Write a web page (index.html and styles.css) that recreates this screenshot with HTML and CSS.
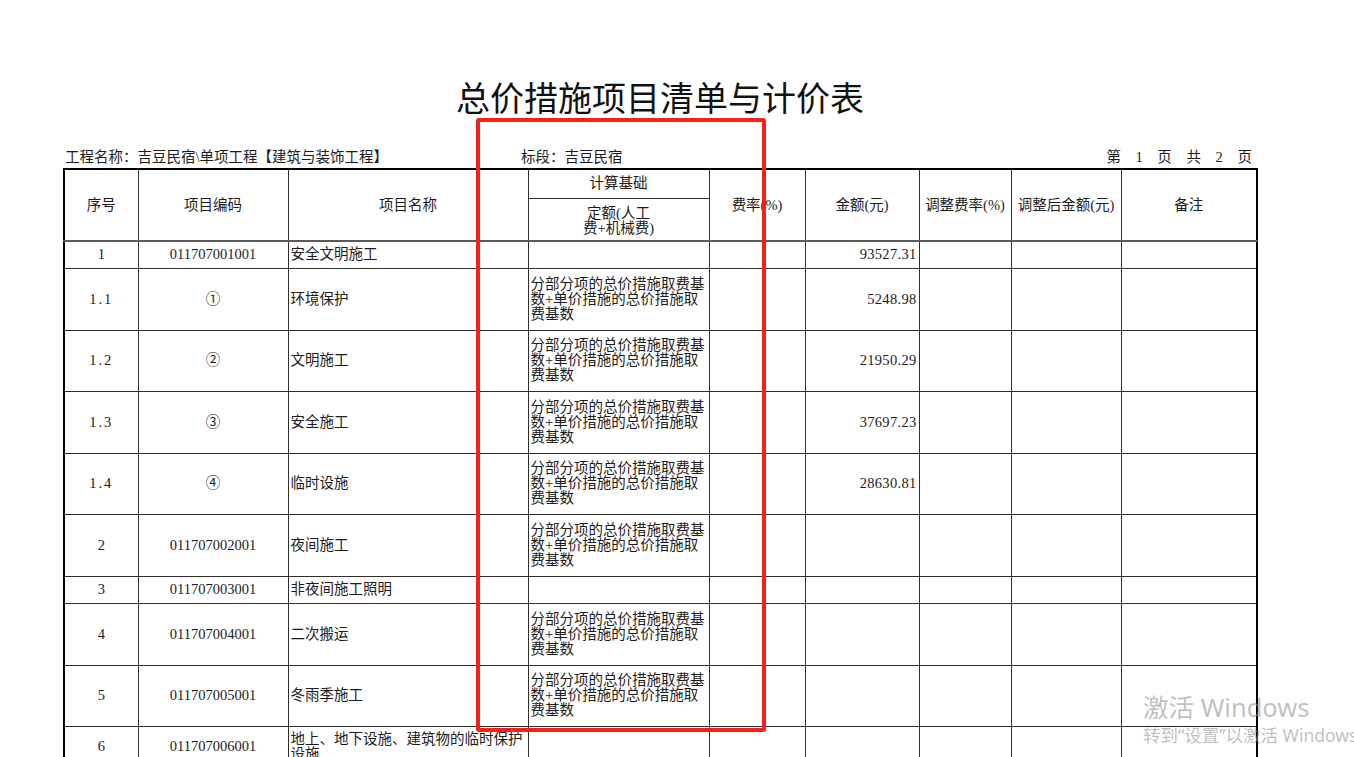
FILE: index.html
```html
<!DOCTYPE html>
<html lang="zh-CN">
<head>
    <meta charset="UTF-8">
    <title>总价措施项目清单与计价表</title>
    <link rel="stylesheet" href="styles.css">
</head>
<body>

    <div class="sheet">
        <h1 class="title">总价措施项目清单与计价表</h1>

        <div class="meta">
            <span>工程名称：吉豆民宿\单项工程【建筑与装饰工程】</span>
            <span>标段：吉豆民宿</span>
            <span class="pager">第 1 页 共 2 页</span>
        </div>

        <table class="bill">
            <colgroup>
                <col class="c-no">
                <col class="c-code">
                <col class="c-name">
                <col class="c-base">
                <col class="c-rate">
                <col class="c-amount">
                <col class="c-adjrate">
                <col class="c-adjamount">
                <col class="c-note">
            </colgroup>
            <thead>
                <tr class="head-top">
                    <th rowspan="2">序号</th>
                    <th rowspan="2">项目编码</th>
                    <th rowspan="2">项目名称</th>
                    <th>计算基础</th>
                    <th rowspan="2">费率(%)</th>
                    <th rowspan="2">金额(元)</th>
                    <th rowspan="2">调整费率(%)</th>
                    <th rowspan="2">调整后金额(元)</th>
                    <th rowspan="2">备注</th>
                </tr>
                <tr class="head-sub">
                    <th>定额(人工<br>费+机械费)</th>
                </tr>
            </thead>
            <tbody>
                <tr class="row-short">
                    <td class="mid">1</td>
                    <td class="mid">011707001001</td>
                    <td class="name">安全文明施工</td>
                    <td class="base"></td>
                    <td></td>
                    <td class="num">93527.31</td>
                    <td></td><td></td><td></td>
                </tr>
                <tr class="row-tall">
                    <td class="mid sub">1.1</td>
                    <td class="mid">①</td>
                    <td class="name">环境保护</td>
                    <td class="base">分部分项的总价措施取费基数+单价措施的总价措施取费基数</td>
                    <td></td>
                    <td class="num">5248.98</td>
                    <td></td><td></td><td></td>
                </tr>
                <tr class="row-tall alt">
                    <td class="mid sub">1.2</td>
                    <td class="mid">②</td>
                    <td class="name">文明施工</td>
                    <td class="base">分部分项的总价措施取费基数+单价措施的总价措施取费基数</td>
                    <td></td>
                    <td class="num">21950.29</td>
                    <td></td><td></td><td></td>
                </tr>
                <tr class="row-tall">
                    <td class="mid sub">1.3</td>
                    <td class="mid">③</td>
                    <td class="name">安全施工</td>
                    <td class="base">分部分项的总价措施取费基数+单价措施的总价措施取费基数</td>
                    <td></td>
                    <td class="num">37697.23</td>
                    <td></td><td></td><td></td>
                </tr>
                <tr class="row-tall alt">
                    <td class="mid sub">1.4</td>
                    <td class="mid">④</td>
                    <td class="name">临时设施</td>
                    <td class="base">分部分项的总价措施取费基数+单价措施的总价措施取费基数</td>
                    <td></td>
                    <td class="num">28630.81</td>
                    <td></td><td></td><td></td>
                </tr>
                <tr class="row-tall">
                    <td class="mid">2</td>
                    <td class="mid">011707002001</td>
                    <td class="name">夜间施工</td>
                    <td class="base">分部分项的总价措施取费基数+单价措施的总价措施取费基数</td>
                    <td></td><td></td><td></td><td></td><td></td>
                </tr>
                <tr class="row-short">
                    <td class="mid">3</td>
                    <td class="mid">011707003001</td>
                    <td class="name">非夜间施工照明</td>
                    <td class="base"></td>
                    <td></td><td></td><td></td><td></td><td></td>
                </tr>
                <tr class="row-tall">
                    <td class="mid">4</td>
                    <td class="mid">011707004001</td>
                    <td class="name">二次搬运</td>
                    <td class="base">分部分项的总价措施取费基数+单价措施的总价措施取费基数</td>
                    <td></td><td></td><td></td><td></td><td></td>
                </tr>
                <tr class="row-tall alt">
                    <td class="mid">5</td>
                    <td class="mid">011707005001</td>
                    <td class="name">冬雨季施工</td>
                    <td class="base">分部分项的总价措施取费基数+单价措施的总价措施取费基数</td>
                    <td></td><td></td><td></td><td></td><td></td>
                </tr>
                <tr class="row-mid">
                    <td class="mid">6</td>
                    <td class="mid">011707006001</td>
                    <td class="name">地上、地下设施、建筑物的临时保护设施</td>
                    <td class="base"></td>
                    <td></td><td></td><td></td><td></td><td></td>
                </tr>
            </tbody>
        </table>
    </div>

    <!-- red annotation box drawn over the sheet -->
    <div class="highlight"></div>

    <div class="watermark">
        <div class="wm-big">激活 Windows</div>
        <div class="wm-small">转到“设置”以激活 Windows</div>
    </div>

</body>
</html>
```

FILE: styles.css
```css
html, body {
    margin: 0;
    padding: 0;
    height: 757px;
    overflow: hidden;
    background: #fff;
}

body {
    font-family: "Liberation Serif", "Noto Sans CJK SC", serif;
    font-size: 14.5px;
    color: #1c1c1c;
}

.sheet {
    width: 1194px;
    padding: 77px 0 0 63px;
}

.title {
    margin: 0;
    font-family: "Noto Sans CJK SC", sans-serif;
    font-weight: normal;
    font-size: 34px;
    line-height: 40px;
    text-align: center;
    color: #111;
}

.meta {
    display: grid;
    grid-template-columns: 456px 1fr auto;
    margin-top: 30px;
    height: 20px;
    line-height: 20px;
    padding: 0 5px 0 2px;
    margin-bottom: 1px;
}

.pager {
    word-spacing: 11px;
}

.bill {
    width: 1194px;
    table-layout: fixed;
    border-collapse: collapse;
    border: 2px solid #000;
}

.c-no { width: 74px; }
.c-code { width: 150px; }
.c-name { width: 240px; }
.c-base { width: 181px; }
.c-rate { width: 96px; }
.c-amount { width: 114px; }
.c-adjrate { width: 92px; }
.c-adjamount { width: 110px; }
.c-note { width: 136px; }

.bill th,
.bill td {
    border: 1px solid #2e2e2e;
    padding: 0 2px;
    font-weight: normal;
    line-height: 15px;
    vertical-align: middle;
    overflow: hidden;
}

.bill th {
    text-align: center;
    white-space: nowrap;
}

.head-top { height: 29px; }
.head-sub { height: 43px; }

.head-sub th {
    padding-top: 3px;
}

.bill thead th[rowspan],
.head-sub th {
    border-bottom: 2px solid #5a5a5a;
}

.row-short { height: 27px; }
.row-tall { height: 62px; }
.row-tall.alt { height: 61px; }
.row-mid { height: 42px; }

.mid {
    text-align: center;
}

.sub {
    letter-spacing: 2px;
}

.name {
    padding-left: 3px;
    text-align: left;
}

.base {
    padding-left: 3px;
    text-align: left;
    line-height: 14.5px;
}

.num {
    text-align: right;
    letter-spacing: 0.3px;
}

.highlight {
    position: absolute;
    left: 476px;
    top: 118px;
    width: 282px;
    height: 606px;
    border: 4px solid #f5201a;
    border-radius: 3px;
}

.watermark {
    position: absolute;
    left: 1143px;
    top: 691px;
    white-space: nowrap;
    font-family: "Noto Sans", "Noto Sans CJK SC", sans-serif;
    color: rgba(150, 150, 150, 0.6);
}

.wm-big {
    font-size: 25.5px;
    line-height: 33px;
}

.wm-small {
    font-size: 17.5px;
    line-height: 22px;
}
```
